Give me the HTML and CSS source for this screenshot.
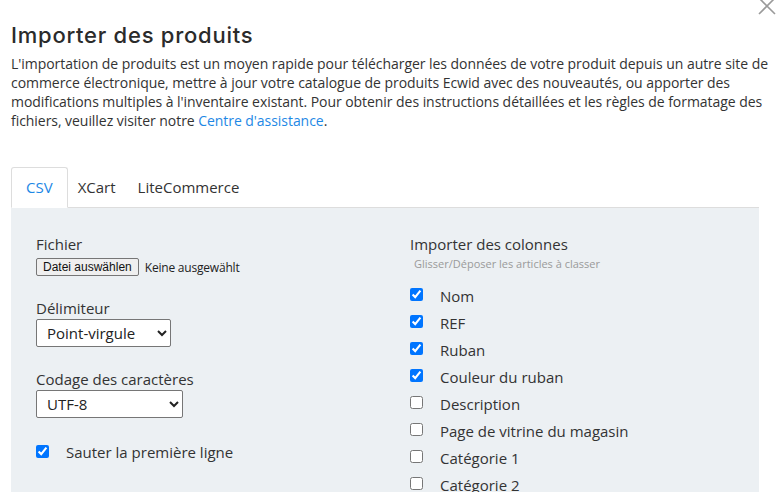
FILE: index.html
```html
<!DOCTYPE html>
<html lang="fr">
<head>
<meta charset="utf-8">
<link rel="stylesheet" href="styles.css">
</head>
<body>
<div class="modal">
  <button class="close" aria-label="Fermer">
    <svg width="18" height="18" viewBox="0 0 18 18"><path d="M1 1L17 17M17 1L1 17" stroke="#9a9a9a" stroke-width="1.6" fill="none"/></svg>
  </button>
  <h1 class="title">Importer des produits</h1>
  <p class="intro">L'importation de produits est un moyen rapide pour télécharger les données de votre produit depuis un autre site de<br>commerce électronique, mettre à jour votre catalogue de produits Ecwid avec des nouveautés, ou apporter des<br>modifications multiples à l'inventaire existant. Pour obtenir des instructions détaillées et les règles de formatage des<br>fichiers, veuillez visiter notre <a class="link" href="#">Centre d'assistance</a>.</p>

  <div class="tabs">
    <div class="tab active">CSV</div>
    <div class="tab">XCart</div>
    <div class="tab">LiteCommerce</div>
    <div class="tab-fill"></div>
  </div>
  <div class="panel">
    <div class="col-left">
      <div class="field">
        <div class="label">Fichier</div>
        <div class="file-row"><span class="file-btn">Datei auswählen</span><span class="file-none">Keine ausgewählt</span></div>
      </div>
      <div class="field">
        <div class="label">Délimiteur</div>
        <select class="select sel-delim"><option>Point-virgule</option></select>
      </div>
      <div class="field">
        <div class="label">Codage des caractères</div>
        <select class="select sel-enc"><option>UTF-8</option></select>
      </div>
      <label class="check-row skip"><input type="checkbox" checked><span>Sauter la première ligne</span></label>
    </div>
    <div class="col-right">
      <div class="label">Importer des colonnes</div>
      <div class="hint">Glisser/Déposer les articles à classer</div>
      <ul class="cols">
        <li><label class="check-row"><input type="checkbox" checked><span>Nom</span></label></li>
        <li><label class="check-row"><input type="checkbox" checked><span>REF</span></label></li>
        <li><label class="check-row"><input type="checkbox" checked><span>Ruban</span></label></li>
        <li><label class="check-row"><input type="checkbox" checked><span>Couleur du ruban</span></label></li>
        <li><label class="check-row"><input type="checkbox"><span>Description</span></label></li>
        <li><label class="check-row"><input type="checkbox"><span>Page de vitrine du magasin</span></label></li>
        <li><label class="check-row"><input type="checkbox"><span>Catégorie 1</span></label></li>
        <li><label class="check-row"><input type="checkbox"><span>Catégorie 2</span></label></li>
      </ul>
    </div>
  </div>
</div>
</body>
</html>
```
FILE: styles.css
```css
html, body {
  margin: 0;
  padding: 0;
  background: #fff;
  height: 100%;
  overflow: hidden;
}
body {
  font-family: "Open Sans", "Noto Sans", Arial, sans-serif;
  color: #333;
}
.modal {
  position: relative;
  display: flow-root;
  width: 748px;
  padding: 0 25px 0 11px;
}
.close {
  position: absolute;
  top: -3px;
  right: 8px;
  border: 0;
  background: none;
  padding: 0;
  width: 18px;
  height: 18px;
}
.close svg { display: block; }
.title {
  font-family: "Inter", "Open Sans", sans-serif;
  font-weight: 500;
  font-size: 22px;
  letter-spacing: 0.75px;
  line-height: 28px;
  margin: 21px 0 5px 0;
  color: #2b2b2b;
}
.intro {
  margin: 0;
  font-size: 14px;
  line-height: 19px;
  letter-spacing: -0.05px;
  color: #333;
  white-space: nowrap;
}
.link {
  color: #1e88e5;
  text-decoration: none;
}
.tabs {
  display: flex;
  margin-top: 37px;
  height: 41px;
}
.tab {
  padding: 0 11px;
  font-size: 15px;
  line-height: 40px;
  color: #333;
  border-bottom: 1px solid #ddd;
}
.tab.active {
  color: #1e88e5;
  border: 1px solid #ddd;
  border-bottom-color: transparent;
  border-radius: 3px 3px 0 0;
  padding: 0 14px;
  line-height: 39px;
}
.tab.active + .tab {
  padding-left: 10px;
}
.tab-fill {
  flex: 1;
  border-bottom: 1px solid #ddd;
}
.panel {
  background: #ecf0f3;
  display: flex;
  padding: 26px 25px 40px 25px;
  min-height: 300px;
}
.col-left {
  width: 374px;
}
.col-right {
  flex: 1;
}
.label {
  font-size: 15px;
  line-height: 20px;
  color: #333;
}
.field {
  margin-bottom: 22px;
}
.file-row {
  display: flex;
  align-items: center;
  gap: 6px;
  margin-top: 4px;
}
.file-btn {
  font-size: 12px;
  line-height: 16px;
  padding: 0 6px;
  border: 1px solid #767676;
  border-radius: 2px;
  background: #efefef;
  color: #111;
  font-family: "Liberation Sans", Arial, sans-serif;
}
.file-none {
  font-size: 12px;
  font-family: "Open Sans", sans-serif;
  letter-spacing: -0.2px;
  color: #222;
}
.select {
  display: block;
  font-family: "Open Sans", sans-serif;
  font-size: 15px;
  height: 28px;
  padding: 0 4px 0 6px;
  border: 1px solid #767676;
  border-radius: 2px;
  background: #fff;
  color: #222;
  margin-top: 1px;
}
.sel-delim { width: 135px; }
.sel-enc { width: 147px; }
.check-row {
  display: flex;
  align-items: center;
  font-size: 15px;
  color: #333;
  line-height: 20px;
}
.check-row input {
  margin: 0 17px 0 0;
  width: 13px;
  height: 13px;
  position: relative;
  top: -1px;
}
.skip {
  margin-top: 24px;
}
.hint {
  font-size: 11px;
  color: #9a9a9a;
  margin: 3px 0 11px 4px;
  line-height: 14px;
}
.cols {
  list-style: none;
  margin: 0;
  padding: 0;
}
.cols li {
  height: 27px;
  display: flex;
  align-items: center;
}
```
